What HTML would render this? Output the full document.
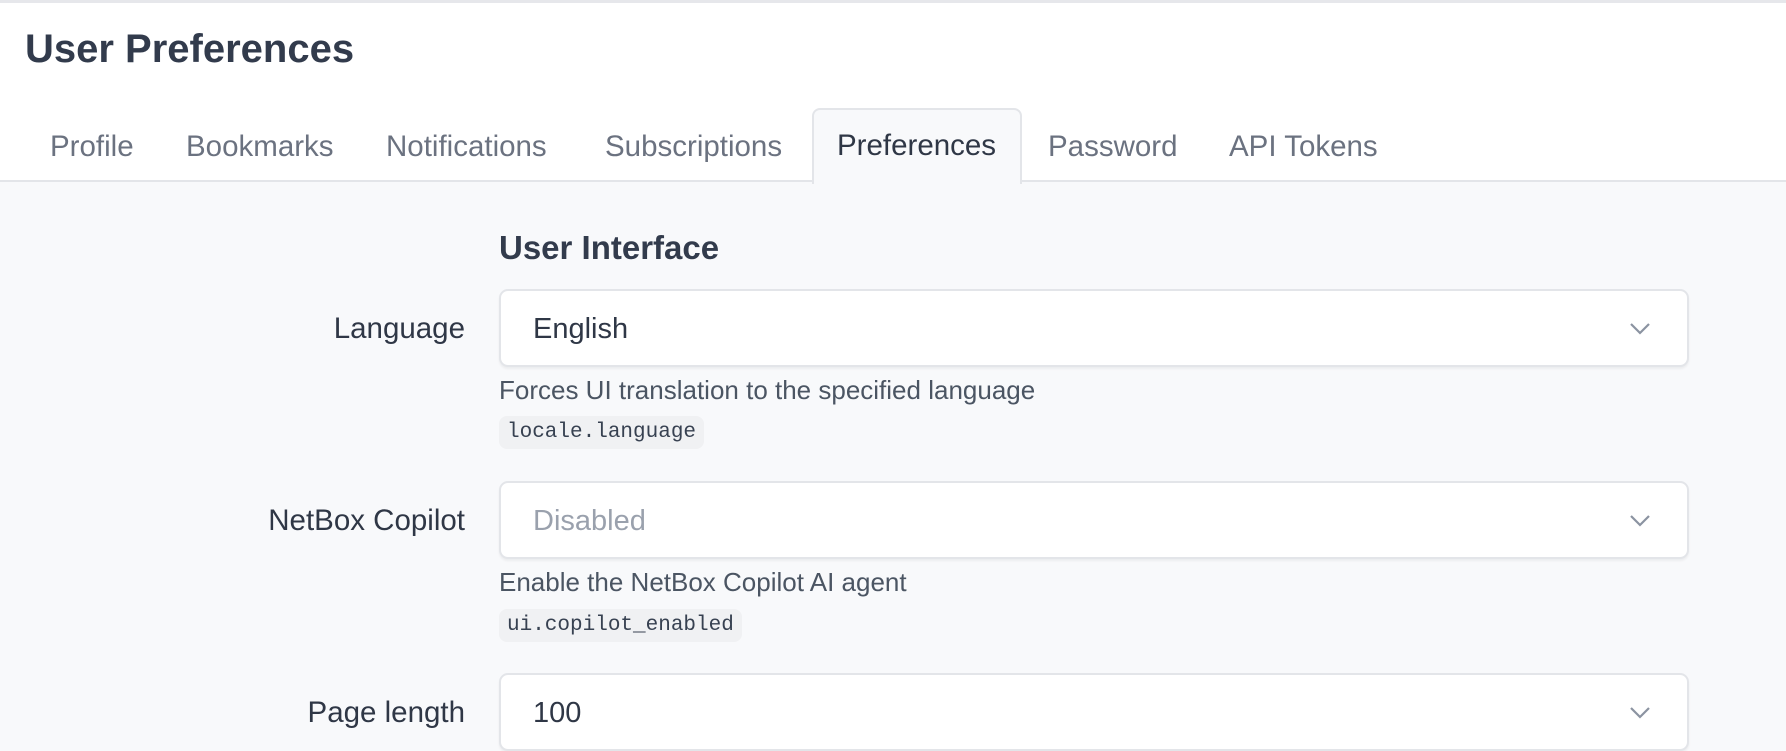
<!DOCTYPE html>
<html><head><style>
*{box-sizing:border-box;margin:0;padding:0}
body{width:1786px;height:714px;overflow:hidden;background:#f8f9fb;font-family:"Liberation Sans",sans-serif;color:#2f3746;position:relative}
.top{position:absolute;left:0;top:0;width:1786px;height:182px;background:#fff;border-top:3px solid #e6e7eb;border-bottom:2px solid #e3e5e9}
h1{position:absolute;left:25px;top:24px;font-size:40px;font-weight:bold;color:#323b4c}
.tab{position:absolute;top:127px;font-size:29.5px;color:#6b7280}
.active{position:absolute;left:812px;top:108px;width:210px;height:76px;background:#f8f9fb;border:2px solid #e3e5e9;border-bottom:none;border-radius:8px 8px 0 0}
.active span{position:absolute;left:23px;top:19px;font-size:29.5px;color:#2f3746}
h2{position:absolute;left:499px;top:229px;font-size:33px;font-weight:bold;color:#323b4c}
.lab{position:absolute;right:1321px;font-size:29.5px;color:#2f3746;white-space:nowrap}
.sel{position:absolute;left:499px;width:1190px;height:78px;background:#fff;border:2px solid #e3e5e9;border-radius:9px;box-shadow:0 2px 2px rgba(0,0,0,.05)}
.sel span{position:absolute;left:32px;top:22px;font-size:29px;color:#2f3746}
.sel svg{position:absolute;right:34px;top:28px}
.help{position:absolute;left:499px;font-size:26px;color:#4b5563}
.code{position:absolute;left:499px;height:33px;padding:0 8px;background:#f0f1f3;border-radius:8px;font-family:"Liberation Mono",monospace;font-size:21px;line-height:33px;color:#374151}
</style></head><body>
<div class="top">
<h1>User Preferences</h1>
<div class="tab" style="left:50px">Profile</div>
<div class="tab" style="left:186px">Bookmarks</div>
<div class="tab" style="left:386px">Notifications</div>
<div class="tab" style="left:605px">Subscriptions</div>
<div class="tab" style="left:1048px">Password</div>
<div class="tab" style="left:1229px">API Tokens</div>
</div>
<div class="active"><span>Preferences</span></div>
<h2>User Interface</h2>
<div class="lab" style="top:312px">Language</div>
<div class="sel" style="top:289px"><span>English</span><svg width="26" height="18" viewBox="0 0 26 18"><path d="M4 5l9 9 9-9" fill="none" stroke="#8b93a1" stroke-width="2.2"/></svg></div>
<div class="help" style="top:375px">Forces UI translation to the specified language</div>
<div class="code" style="top:416px">locale.language</div>
<div class="lab" style="top:504px">NetBox Copilot</div>
<div class="sel" style="top:481px"><span style="color:#9aa1ad">Disabled</span><svg width="26" height="18" viewBox="0 0 26 18"><path d="M4 5l9 9 9-9" fill="none" stroke="#8b93a1" stroke-width="2.2"/></svg></div>
<div class="help" style="top:567px">Enable the NetBox Copilot AI agent</div>
<div class="code" style="top:609px">ui.copilot_enabled</div>
<div class="lab" style="top:696px">Page length</div>
<div class="sel" style="top:673px"><span>100</span><svg width="26" height="18" viewBox="0 0 26 18"><path d="M4 5l9 9 9-9" fill="none" stroke="#8b93a1" stroke-width="2.2"/></svg></div>
</body></html>
